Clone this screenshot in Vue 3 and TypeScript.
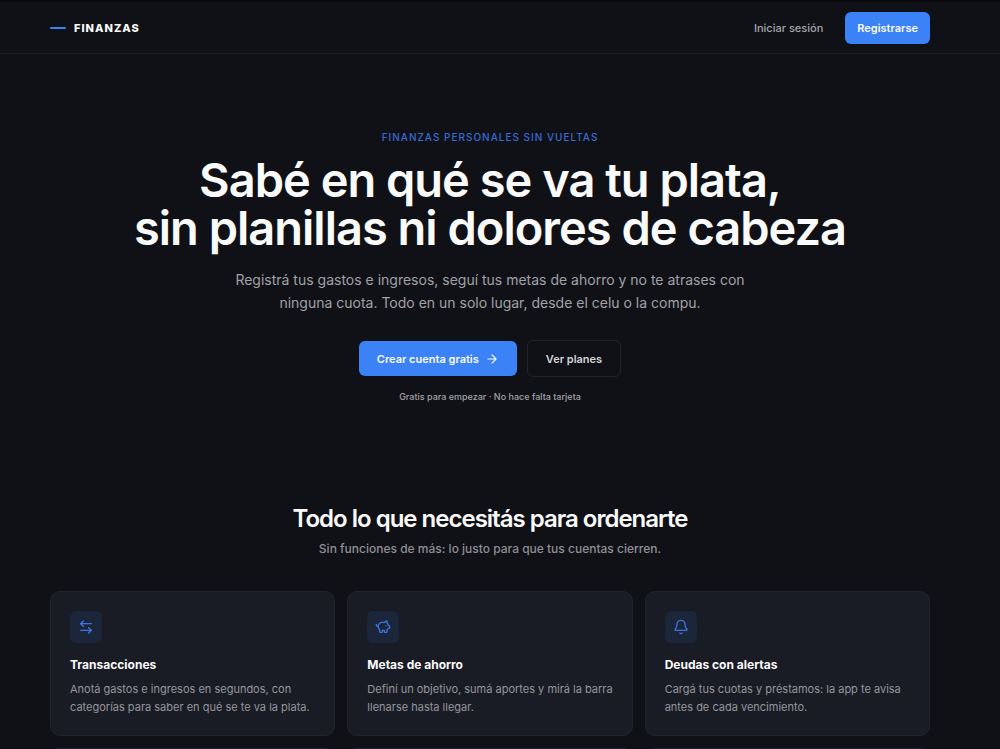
<script setup lang="ts">
interface Feature {
  title: string
  text: string
  icon: string[]
}

const features: Feature[] = [
  {
    title: 'Transacciones',
    text: 'Anotá gastos e ingresos en segundos, con categorías para saber en qué se te va la plata.',
    icon: ['M8 3 4 7l4 4', 'M4 7h16', 'm16 21 4-4-4-4', 'M20 17H4'],
  },
  {
    title: 'Metas de ahorro',
    text: 'Definí un objetivo, sumá aportes y mirá la barra llenarse hasta llegar.',
    icon: [
      'M11 17h3v2a1 1 0 0 0 1 1h2a1 1 0 0 0 1-1v-3a3.16 3.16 0 0 0 2-2h1a1 1 0 0 0 1-1v-2a1 1 0 0 0-1-1h-1a5 5 0 0 0-2-4V3a4 4 0 0 0-3.2 1.6l-.3.4H11a6 6 0 0 0-6 6v1a5 5 0 0 0 2 4v3a1 1 0 0 0 1 1h2a1 1 0 0 0 1-1z',
      'M16 10h.01',
      'M2 8v1a2 2 0 0 0 2 2h1',
    ],
  },
  {
    title: 'Deudas con alertas',
    text: 'Cargá tus cuotas y préstamos: la app te avisa antes de cada vencimiento.',
    icon: [
      'M10.268 21a2 2 0 0 0 3.464 0',
      'M3.262 15.326A1 1 0 0 0 4 17h16a1 1 0 0 0 .74-1.673C19.41 13.956 18 12.499 18 8A6 6 0 0 0 6 8c0 4.499-1.411 5.956-2.738 7.326',
    ],
  },
]
</script>

<template>
  <div class="page">
    <header class="topbar">
      <a class="brand" href="#"><span class="dash"></span>FINANZAS</a>
      <nav class="nav">
        <a class="login" href="#">Iniciar sesión</a>
        <a class="btn register" href="#">Registrarse</a>
      </nav>
    </header>
    <main class="content">
      <section class="hero">
        <p class="eyebrow">FINANZAS PERSONALES SIN VUELTAS</p>
        <h1>Sabé en qué se va tu plata,<br />sin planillas ni dolores de cabeza</h1>
        <p class="lead">
          Registrá tus gastos e ingresos, seguí tus metas de ahorro y no te atrases con
          ninguna cuota. Todo en un solo lugar, desde el celu o la compu.
        </p>
        <div class="actions">
          <a class="btn primary" href="#">
            Crear cuenta gratis
            <svg viewBox="0 0 24 24" width="14" height="14" aria-hidden="true">
              <path d="M5 12h14M12 5l7 7-7 7" />
            </svg>
          </a>
          <a class="btn outline" href="#planes">Ver planes</a>
        </div>
        <p class="note">Gratis para empezar · No hace falta tarjeta</p>
      </section>
      <section class="features">
        <h2>Todo lo que necesitás para ordenarte</h2>
        <p class="sub">Sin funciones de más: lo justo para que tus cuentas cierren.</p>
        <div class="grid">
          <article v-for="f in features" :key="f.title" class="card">
            <span class="tile">
              <svg viewBox="0 0 24 24" width="16" height="16" aria-hidden="true">
                <path v-for="d in f.icon" :key="d" :d="d" />
              </svg>
            </span>
            <h3>{{ f.title }}</h3>
            <p>{{ f.text }}</p>
          </article>
          <article v-for="n in 3" :key="n" class="card"></article>
        </div>
      </section>
    </main>
  </div>
</template>

<style>
body {
  margin: 0;
  background: #101116;
}
</style>

<style scoped>
.page {
  height: 100vh;
  overflow: hidden auto;
  scrollbar-width: none;
  background: #101116;
  color: #fafafa;
  font-family: Inter, "Liberation Sans", sans-serif;
  font-size: 11px;
}
* {
  box-sizing: border-box;
}
h1, h2, h3, p {
  margin: 0;
}
a {
  color: inherit;
  text-decoration: none;
}
svg {
  fill: none;
  stroke: currentColor;
  stroke-width: 2;
  stroke-linecap: round;
  stroke-linejoin: round;
}
.topbar {
  display: flex;
  align-items: center;
  justify-content: space-between;
  height: 54px;
  padding: 0 70px 0 50px;
  border-top: 2px solid #09090d;
  border-bottom: 1px solid #1d1e23;
}
.brand {
  display: flex;
  align-items: center;
  gap: 8px;
  font-weight: 800;
  letter-spacing: 1px;
}
.dash {
  width: 16px;
  height: 2px;
  border-radius: 1px;
  background: #3b82f6;
}
.nav {
  display: flex;
  align-items: center;
  gap: 22px;
}
.login {
  color: #a5a5aa;
  font-weight: 500;
}
.btn {
  display: inline-flex;
  align-items: center;
  justify-content: center;
  gap: 6px;
  border-radius: 6px;
  font-weight: 600;
}
.register {
  height: 32px;
  padding: 0 12px;
  background: #3b82f6;
}
.content {
  padding: 0 70px 40px 50px;
}
.hero {
  display: flex;
  flex-direction: column;
  align-items: center;
  padding-top: 76px;
  text-align: center;
}
.eyebrow {
  color: #3869d4;
  font-size: 10px;
  font-weight: 500;
  line-height: 14px;
  letter-spacing: 1px;
}
h1 {
  margin-top: 12px;
  font-size: 47px;
  font-weight: 600;
  line-height: 48px;
  letter-spacing: -1px;
  white-space: nowrap;
}
.lead {
  max-width: 520px;
  margin-top: 16px;
  color: #a1a1a6;
  font-size: 14px;
  line-height: 23px;
}
.actions {
  display: flex;
  align-items: center;
  gap: 10px;
  margin-top: 26px;
}
.primary {
  height: 35px;
  padding: 0 18px;
  background: #3b82f6;
}
.outline {
  height: 37px;
  padding: 0 18px;
  border: 1px solid #222329;
  color: #d4d4d8;
}
.note {
  margin-top: 12px;
  color: #a1a1a6;
  font-size: 9px;
  font-weight: 500;
  line-height: 16px;
}
.features {
  padding-top: 98px;
  text-align: center;
}
h2 {
  font-size: 24px;
  font-weight: 600;
  line-height: 32px;
  letter-spacing: -1px;
}
.sub {
  margin-top: 4px;
  color: #8f8f95;
  font-size: 12px;
  font-weight: 500;
  line-height: 20px;
}
.grid {
  display: grid;
  grid-template-columns: repeat(3, 1fr);
  gap: 12px;
  margin-top: 32px;
  text-align: left;
}
.card {
  min-height: 145px;
  padding: 19px 12px 19px 19px;
  border: 1px solid #22242d;
  border-radius: 10px;
  background: #1a1c25;
}
.tile {
  display: flex;
  align-items: center;
  justify-content: center;
  width: 32px;
  height: 32px;
  border-radius: 6px;
  background: #1b263b;
  color: #3b76e0;
}
h3 {
  margin-top: 13px;
  font-size: 12px;
  font-weight: 700;
  line-height: 18px;
}
.card p {
  margin-top: 6px;
  color: #95969d;
  line-height: 18px;
}
</style>
